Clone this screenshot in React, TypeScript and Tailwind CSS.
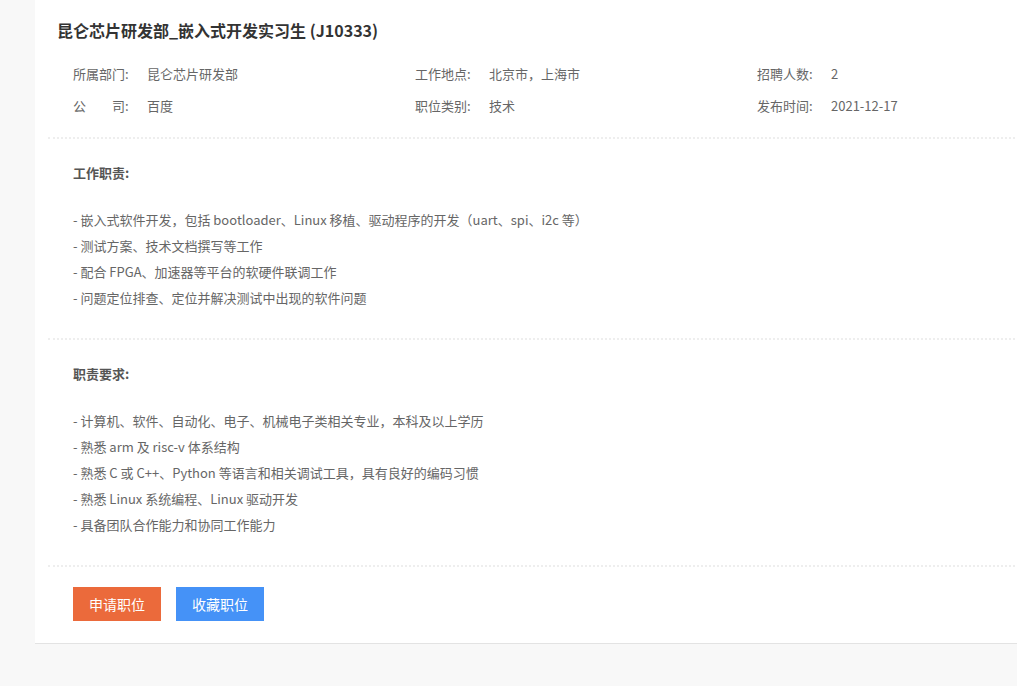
import React from 'react';

const info = [
  [
    { label: '所属部门:', value: '昆仑芯片研发部' },
    { label: '工作地点:', value: '北京市，上海市' },
    { label: '招聘人数:', value: '2' },
  ],
  [
    { label: '公\u3000\u3000司:', value: '百度' },
    { label: '职位类别:', value: '技术' },
    { label: '发布时间:', value: '2021-12-17' },
  ],
];

const duties = [
  '- 嵌入式软件开发，包括 bootloader、Linux 移植、驱动程序的开发（uart、spi、i2c 等）',
  '- 测试方案、技术文档撰写等工作',
  '- 配合 FPGA、加速器等平台的软硬件联调工作',
  '- 问题定位排查、定位并解决测试中出现的软件问题',
];

const requirements = [
  '- 计算机、软件、自动化、电子、机械电子类相关专业，本科及以上学历',
  '- 熟悉 arm 及 risc-v 体系结构',
  '- 熟悉 C 或 C++、Python 等语言和相关调试工具，具有良好的编码习惯',
  '- 熟悉 Linux 系统编程、Linux 驱动开发',
  '- 具备团队合作能力和协同工作能力',
];

const Divider = () => <div className="ml-[13px] border-t-2 border-dotted border-[#eeeeee]" />;

const Section = ({ title, items }: { title: string; items: string[] }) => (
  <div className="pl-[38px] pt-[21px] pb-[27px]">
    <h3 className="text-[13px] leading-[26px] font-bold text-[#555]">{title}</h3>
    <ul className="mt-[21px]">
      {items.map((item) => (
        <li key={item} className="text-[13px] leading-[26px] text-[#666]">
          {item}
        </li>
      ))}
    </ul>
  </div>
);

export default function App() {
  return (
    <div
      className="h-screen w-full overflow-hidden bg-[#f8f8f8] flex"
      style={{ fontFamily: '"Noto Sans CJK SC", "Noto Sans", sans-serif' }}
    >
      <div className="ml-[35px] w-[1120px] shrink-0 self-start bg-white border-b border-[#e3e3e3]">
        {/* Title */}
        <div className="pt-[18px] pl-[22px]">
          <h1 className="text-[16px] leading-[24px] font-bold text-[#333]">
            昆仑芯片研发部_嵌入式开发实习生 (J10333)
          </h1>
        </div>

        {/* Info */}
        <div className="mt-[16px] pl-[38px] pb-[15px]">
          {info.map((row, i) => (
            <div key={i} className="flex h-[32px] items-center">
              {row.map((cell) => (
                <div key={cell.label} className="flex w-[342px] text-[13px] text-[#666]">
                  <span className="w-[74px] whitespace-pre">{cell.label}</span>
                  <span>{cell.value}</span>
                </div>
              ))}
            </div>
          ))}
        </div>

        <Divider />
        <Section title="工作职责:" items={duties} />
        <Divider />
        <Section title="职责要求:" items={requirements} />
        <Divider />

        {/* Actions */}
        <div className="flex gap-[15px] pl-[38px] pt-[20px] pb-[22px]">
          <button className="h-[34px] w-[88px] bg-[#eb6a3b] text-[14px] text-white">申请职位</button>
          <button className="h-[34px] w-[88px] bg-[#4592f7] text-[14px] text-white">收藏职位</button>
        </div>
      </div>
    </div>
  );
}
